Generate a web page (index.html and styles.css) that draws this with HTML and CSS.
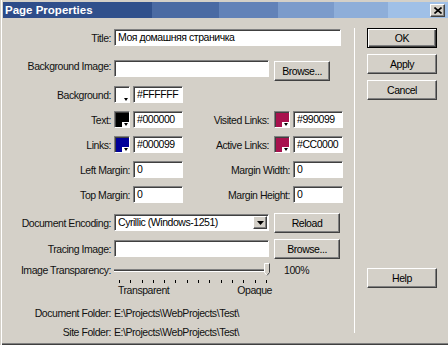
FILE: index.html
```
<!DOCTYPE html>
<html>
<head>
    <title>Page Properties</title>
    <meta charset="utf-8">
    <link rel="stylesheet" href="styles.css">
</head>
<body>
<div class="dialog">
    <!-- title bar -->
    <div class="titlebar">
        <span class="caption">Page Properties</span>
        <span class="close">
            <svg width="8" height="7" viewBox="0 0 8 7"><path d="M0.5 0.5 L7.5 6.5 M7.5 0.5 L0.5 6.5" stroke="#000" stroke-width="1.6"/></svg>
        </span>
    </div>

    <div class="content">
        <!-- form -->
        <div class="form">
            <div class="row r-title">
                <span class="lbl">Title:</span>
                <div class="field w-title">Моя домашняя страничка</div>
            </div>
            <div class="row r-bgimg">
                <span class="lbl">Background Image:</span>
                <div class="field w-path"></div>
                <div class="btn w-browse1 mt1">Browse...</div>
            </div>

            <div class="grid first">
                <span class="lbl">Background:</span>
                <span class="swatch c-white"></span>
                <div class="field">#FFFFFF</div>
            </div>
            <div class="grid">
                <span class="lbl">Text:</span>
                <span class="swatch c-black"></span>
                <div class="field">#000000</div>
                <span class="lbl rlbl">Visited Links:</span>
                <span class="swatch c-red"></span>
                <div class="field">#990099</div>
            </div>
            <div class="grid">
                <span class="lbl">Links:</span>
                <span class="swatch c-blue"></span>
                <div class="field">#000099</div>
                <span class="lbl rlbl">Active Links:</span>
                <span class="swatch c-red"></span>
                <div class="field">#CC0000</div>
            </div>
            <div class="grid">
                <span class="lbl span2">Left Margin:</span>
                <div class="field">0</div>
                <span class="lbl span2">Margin Width:</span>
                <div class="field">0</div>
            </div>
            <div class="grid">
                <span class="lbl span2">Top Margin:</span>
                <div class="field">0</div>
                <span class="lbl span2">Margin Height:</span>
                <div class="field">0</div>
            </div>

            <div class="row r-enc">
                <span class="lbl">Document Encoding:</span>
                <div class="field select w-path">
                    <span>Cyrillic (Windows-1251)</span>
                    <span class="drop"><svg width="7" height="4" viewBox="0 0 7 4"><path d="M0 0 H7 L3.5 4 Z" fill="#000"/></svg></span>
                </div>
                <div class="btn w-browse2">Reload</div>
            </div>
            <div class="row r-trace">
                <span class="lbl">Tracing Image:</span>
                <div class="field w-path"></div>
                <div class="btn w-browse2">Browse...</div>
            </div>

            <!-- image transparency slider -->
            <div class="slider">
                <span class="lbl">Image Transparency:</span>
                <div class="track">
                    <span class="thumb">
                        <svg width="6" height="13" viewBox="0 0 6 13"><path d="M0.5 0.5 H5.5 V9.5 L3 12.5 L0.5 9.5 Z" fill="#d4d0c8" stroke="#fff"/><path d="M5.5 0.5 V9.5 L3 12.5" fill="none" stroke="#404040"/></svg>
                    </span>
                </div>
                <span class="pct">100%</span>
                <span></span>
                <div class="ticks">
                    <i></i><i></i><i></i><i></i><i></i><i></i><i></i>
                    <i></i><i></i><i></i><i></i><i></i><i></i><i></i>
                </div>
                <span></span>
                <span></span>
                <div class="scale"><span>Transparent</span><span>Opaque</span></div>
            </div>

            <div class="row path first-path">
                <span class="lbl">Document Folder:</span>
                <span>E:\Projects\WebProjects\Test\</span>
            </div>
            <div class="row path">
                <span class="lbl">Site Folder:</span>
                <span>E:\Projects\WebProjects\Test\</span>
            </div>
        </div>

        <div class="sep"></div>

        <!-- buttons -->
        <div class="actions">
            <div class="btn default">OK</div>
            <div class="btn">Apply</div>
            <div class="btn">Cancel</div>
            <div class="btn help">Help</div>
        </div>
    </div>
</div>
</body>
</html>
```

FILE: styles.css
```
*{ margin:0; padding:0; box-sizing:border-box; }
body{
    width:448px;
    height:345px;
    overflow:hidden;
    background:#d4d0c8;
    font:10.5px "Liberation Sans", Arial, sans-serif;
    letter-spacing:-0.45px;
    color:#111;
}
.dialog{
    height:345px;
    padding-top:2px;
    display:flex;
    flex-direction:column;
    border-left:1px solid #d4d0c8;
    box-shadow:inset 1px 0 #fff, inset 0 -1px #404040, inset 0 -2px #808080;
}
.titlebar{
    height:16px;
    margin-left:2px;
    padding:0 3px 0 2px;
    display:flex;
    align-items:center;
    justify-content:space-between;
    color:#fff;
    font-weight:bold;
    font-size:11.5px;
    letter-spacing:0;
    background:linear-gradient(to right,
        #2c4a88 0, #30508c 76px, #30508c 149px,
        #4a6aa3 149px, #4a6aa3 216px,
        #6282b8 216px, #6282b8 275px,
        #7b9bcb 275px, #7b9bcb 331px,
        #8eaed9 331px, #8eaed9 385px,
        #a0c0e7 385px);
}
.close{
    width:15px;
    height:13px;
    display:flex;
    align-items:center;
    justify-content:center;
    background:#d4d0c8;
    border:1px solid;
    border-color:#fff #404040 #404040 #fff;
    box-shadow:inset -1px -1px #808080;
}
.content{
    flex:1;
    display:flex;
}
.form{
    width:353px;
    padding:11px 0 0 1px;
}
.sep{
    width:1px;
    background:#fff;
    margin:10px 0 12px;
}
.actions{
    padding:10px 0 0 12px;
    display:flex;
    flex-direction:column;
}
.actions .btn{
    width:70px;
    height:20px;
    margin-bottom:6px;
}
.actions .help{ margin-top:162px; }

/* controls */
.lbl{
    width:109px;
    margin-right:3px;
    text-align:right;
    white-space:nowrap;
    flex-shrink:0;
}
.field{
    height:17px;
    background:#fff;
    border:1px solid;
    border-color:#808080 #fff #fff #808080;
    box-shadow:inset 1px 1px #404040;
    padding:0 3px;
    line-height:15px;
    white-space:nowrap;
    overflow:hidden;
    color:#000;
}
.btn{
    display:flex;
    align-items:center;
    justify-content:center;
    height:20px;
    background:#d4d0c8;
    border:1px solid;
    border-color:#fff #404040 #404040 #fff;
    box-shadow:inset -1px -1px #808080;
    color:#000;
}
.btn.default{
    border-color:#000;
    box-shadow:inset 1px 1px #fff, inset -1px -1px #404040, inset -2px -2px #808080;
}
.mt1{ margin-top:1px; }
.w-title{ width:227px; }
.w-path{ width:155px; }
.w-browse1{ width:56px; margin-left:5px; }
.w-browse2{ width:66px; margin-left:5px; }

.row{
    display:flex;
    align-items:center;
}
.r-title{ height:17px; }
.r-bgimg{ margin-top:14px; height:20px; align-items:flex-start; }
.r-enc{ margin-top:9px; height:21px; }
.r-trace{ margin-top:5px; height:21px; }

.select{
    display:flex;
    justify-content:space-between;
    align-items:center;
    padding:0 1px 0 3px;
}
.drop{
    width:14px;
    height:13px;
    display:flex;
    align-items:center;
    justify-content:center;
    background:#d4d0c8;
    border:1px solid;
    border-color:#fff #404040 #404040 #fff;
    box-shadow:inset -1px -1px #808080;
}

/* colour rows */
.grid{
    display:grid;
    grid-template-columns:112px 19px 50px 91px 19px 50px;
    align-items:center;
    height:17px;
    margin-top:8px;
}
.grid.first{ margin-top:6px; }
.grid .lbl{
    width:auto;
    margin-right:0;
    padding-right:3px;
}
.grid .rlbl{ padding-right:5px; }
.grid .span2{ grid-column:span 2; }
.swatch{
    position:relative;
    width:16px;
    height:17px;
    border:1px solid;
    border-color:#808080 #fff #fff #808080;
    box-shadow:inset 1px 1px #404040;
}
.swatch::before{
    content:"";
    position:absolute;
    right:0;
    bottom:0;
    width:7px;
    height:5px;
    background:#fff;
}
.swatch::after{
    content:"";
    position:absolute;
    right:1px;
    bottom:1px;
    border-left:2.5px solid transparent;
    border-right:2.5px solid transparent;
    border-top:3px solid #000;
}
.c-white{ background:#fff; }
.c-black{ background:#000; }
.c-blue{ background:#000099; }
.c-red{ background:#a8124e; }

/* slider */
.slider{
    margin-top:3px;
    display:grid;
    grid-template-columns:112px 156px auto;
    grid-template-rows:16px 6px 12px;
    align-items:center;
}
.slider .lbl{
    width:auto;
    margin-right:0;
    padding-right:3px;
}
.track{
    position:relative;
    height:3px;
    border-top:1px solid #808080;
    border-bottom:1px solid #fff;
    background:#404040;
}
.thumb{
    position:absolute;
    right:0;
    top:-7px;
    line-height:0;
}
.pct{ margin-left:14px; }
.ticks{
    height:6px;
    padding:2px 3px 0 5px;
    display:flex;
    justify-content:space-between;
    align-items:flex-start;
}
.ticks i{
    width:1px;
    height:3px;
    background:#000;
}
.scale{
    display:flex;
    justify-content:space-between;
    padding:0 0 0 4px;
    margin-right:-2px;
}

/* folders */
.path{ height:14px; margin-top:5px; }
.path.first-path{ margin-top:10px; }
```
